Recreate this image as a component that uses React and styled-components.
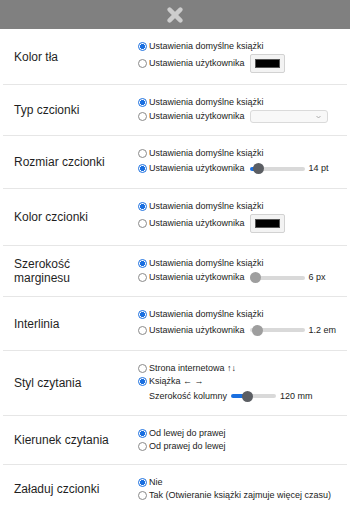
import React from "react";
import styled, { createGlobalStyle } from "styled-components";

const GlobalStyle = createGlobalStyle`
  html, body { margin: 0; padding: 0; background: #ffffff; }
  body { font-family: "Liberation Sans", Arial, sans-serif; color: #222; }
`;

const Panel = styled.div`
  width: 350px;
  background: #fff;
`;

const Header = styled.div`
  height: 29px;
  background: #808080;
  display: flex;
  align-items: center;
  justify-content: center;
`;

const CloseButton = styled.button`
  border: 0;
  background: transparent;
  padding: 0;
  margin: 1px 0 0 0;
  width: 16px;
  height: 16px;
  display: flex;
  cursor: pointer;
`;

const List = styled.div`
  margin: 0 3px;
`;

const Row = styled.div`
  display: grid;
  grid-template-columns: 124px 1fr;
  align-items: center;
  padding: 11px 0 11px 11px;
  border-bottom: 1px solid ${(p) => (p.$last ? "transparent" : "#e6e6e6")};
`;

const Label = styled.div`
  font-size: 12px;
  line-height: 14px;
  color: #1f1f1f;
  max-width: 100px;
`;

const Options = styled.div`
  display: flex;
  flex-direction: column;
`;

const Option = styled.label`
  display: flex;
  align-items: center;
  height: ${(p) => p.$h || 13}px;
  font-size: 9px;
  line-height: 13px;
  color: #222;
  white-space: nowrap;
  padding-left: ${(p) => (p.$indent ? 11 : 0)}px;
`;

const Radio = styled.input.attrs({ type: "radio" })`
  appearance: none;
  -webkit-appearance: none;
  width: 9px;
  height: 9px;
  margin: 0 2px 0 0;
  border-radius: 50%;
  box-sizing: border-box;
  border: 1px solid #8a8a8a;
  background: #fff;
  flex: none;
  &:checked {
    border-color: #1a6fe0;
    background: radial-gradient(circle, #1a6fe0 0 2.3px, #fff 2.8px);
  }
`;

const Swatch = styled.span`
  display: inline-flex;
  box-sizing: border-box;
  width: 35px;
  height: 19px;
  margin-left: ${(p) => p.$ml || 5}px;
  padding: 4px 4px;
  border: 1px solid #d2d2d2;
  border-radius: 2px;
  background: #f3f3f3;
`;

const SwatchColor = styled.span`
  flex: 1;
  background: ${(p) => p.$color};
  border: 1px solid #555;
`;

const Select = styled.span`
  display: inline-flex;
  align-items: center;
  justify-content: flex-end;
  box-sizing: border-box;
  width: 78px;
  height: 13px;
  margin-left: 5px;
  padding-right: 6px;
  border: 1px solid #dadada;
  border-radius: 3px;
  background: #f8f8f8;
`;

const Range = styled.input.attrs({ type: "range" })`
  appearance: none;
  -webkit-appearance: none;
  width: ${(p) => p.$w}px;
  height: 12px;
  margin: 0 0 0 ${(p) => p.$ml}px;
  padding: 0;
  background: transparent;
  &::-webkit-slider-runnable-track {
    height: 4px;
    border-radius: 2px;
    background: linear-gradient(
      to right,
      ${(p) => (p.disabled ? "#dcdcdc" : "#1a6fe0")} 0 var(--fill),
      #d9d9d9 var(--fill)
    );
  }
  &::-webkit-slider-thumb {
    -webkit-appearance: none;
    appearance: none;
    width: 11px;
    height: 11px;
    border-radius: 50%;
    border: 0;
    margin-top: -3.5px;
    background: ${(p) => (p.disabled ? "#9e9e9e" : "#5b5e63")};
  }
`;

const Value = styled.span`
  margin-left: 4px;
  font-size: 9px;
`;

function XIcon() {
  return (
    <svg width="16" height="16" viewBox="0 0 16 16">
      <path
        d="M2.6 2.6 L13.4 13.4 M13.4 2.6 L2.6 13.4"
        stroke="#cdcdcd"
        strokeWidth="4.4"
        strokeLinecap="round"
        fill="none"
      />
    </svg>
  );
}

function Chevron() {
  return (
    <svg width="5" height="4" viewBox="0 0 5 4">
      <path d="M0.5 1 L2.5 3 L4.5 1" stroke="#9a9a9a" strokeWidth="0.8" fill="none" />
    </svg>
  );
}

function Slider({ min, max, value, width, ml = 5, disabled }) {
  const f = (value - min) / (max - min);
  const thumb = 11;
  const pct = ((thumb / 2 + f * (width - thumb)) / width) * 100;
  return (
    <Range
      min={min}
      max={max}
      step="0.1"
      defaultValue={value}
      $w={width}
      $ml={ml}
      disabled={disabled}
      style={{ "--fill": `${pct}%` }}
    />
  );
}

const DEF = "Ustawienia domyślne książki";
const USR = "Ustawienia użytkownika";

export default function App() {
  return (
    <>
      <GlobalStyle />
      <Panel>
        <Header>
          <CloseButton aria-label="Zamknij">
            <XIcon />
          </CloseButton>
        </Header>
        <List>
          <Row>
            <Label>Kolor tła</Label>
            <Options>
              <Option><Radio name="bg" defaultChecked />{DEF}</Option>
              <Option $h={20}><Radio name="bg" />{USR}<Swatch><SwatchColor $color="#000" /></Swatch></Option>
            </Options>
          </Row>
          <Row>
            <Label>Typ czcionki</Label>
            <Options>
              <Option><Radio name="ff" defaultChecked />{DEF}</Option>
              <Option $h={15}><Radio name="ff" />{USR}<Select><Chevron /></Select></Option>
            </Options>
          </Row>
          <Row>
            <Label>Rozmiar czcionki</Label>
            <Options>
              <Option><Radio name="fs" />{DEF}</Option>
              <Option $h={17}><Radio name="fs" defaultChecked />{USR}<Slider min={12} max={36} value={14} width={55} /><Value>14 pt</Value></Option>
            </Options>
          </Row>
          <Row>
            <Label>Kolor czcionki</Label>
            <Options>
              <Option><Radio name="fc" defaultChecked />{DEF}</Option>
              <Option $h={21}><Radio name="fc" />{USR}<Swatch><SwatchColor $color="#000" /></Swatch></Option>
            </Options>
          </Row>
          <Row>
            <Label>Szerokość marginesu</Label>
            <Options>
              <Option><Radio name="mg" defaultChecked />{DEF}</Option>
              <Option $h={15}><Radio name="mg" />{USR}<Slider min={5} max={60} value={5.3} width={55} disabled /><Value>6 px</Value></Option>
            </Options>
          </Row>
          <Row>
            <Label>Interlinia</Label>
            <Options>
              <Option><Radio name="lh" defaultChecked />{DEF}</Option>
              <Option $h={18}><Radio name="lh" />{USR}<Slider min={1} max={4} value={1.15} width={55} disabled /><Value>1.2 em</Value></Option>
            </Options>
          </Row>
          <Row>
            <Label>Styl czytania</Label>
            <Options>
              <Option><Radio name="rs" />Strona internetowa ↑↓</Option>
              <Option><Radio name="rs" defaultChecked />Książka ← →</Option>
              <Option $h={16} $indent>Szerokość kolumny<Slider min={60} max={240} value={120} width={45} ml={4} /><Value>120 mm</Value></Option>
            </Options>
          </Row>
          <Row>
            <Label>Kierunek czytania</Label>
            <Options>
              <Option><Radio name="dir" defaultChecked />Od lewej do prawej</Option>
              <Option><Radio name="dir" />Od prawej do lewej</Option>
            </Options>
          </Row>
          <Row $last>
            <Label>Załaduj czcionki</Label>
            <Options>
              <Option><Radio name="lf" defaultChecked />Nie</Option>
              <Option><Radio name="lf" />Tak (Otwieranie książki zajmuje więcej czasu)</Option>
            </Options>
          </Row>
        </List>
      </Panel>
    </>
  );
}
